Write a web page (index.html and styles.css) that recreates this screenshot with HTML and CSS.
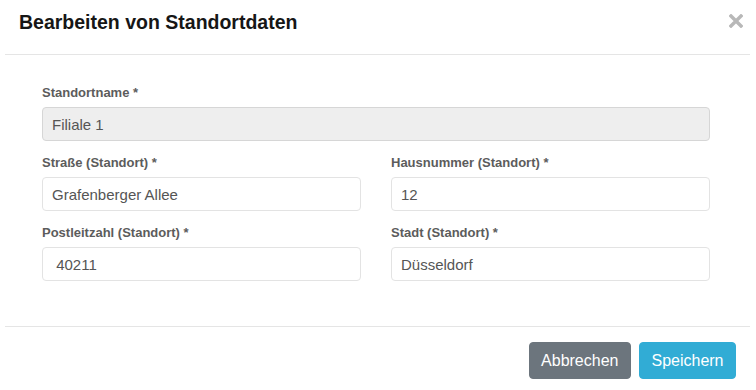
FILE: index.html
```html
<!DOCTYPE html>
<html lang="de">
<head>
    <meta charset="UTF-8">
    <meta name="viewport" content="width=device-width, initial-scale=1.0">
    <title>Bearbeiten von Standortdaten</title>
    <link rel="stylesheet" href="styles.css">
</head>
<body>

<!-- Dialog: Standort bearbeiten -->
<div class="modal">
    <div class="modal-header">
        <h4 class="modal-title">Bearbeiten von Standortdaten</h4>
        <button class="close-btn" type="button" aria-label="Schließen">
            <svg width="14" height="14" viewBox="0 0 14 14">
                <path d="M2 2 L12 12 M12 2 L2 12" stroke="#b8b8b8" stroke-width="3.4" stroke-linecap="square"/>
            </svg>
        </button>
    </div>

    <div class="modal-body">
        <div class="form-group full">
            <label>Standortname *</label>
            <input type="text" class="form-control" value="Filiale 1" disabled>
        </div>
        <div class="form-row">
            <div class="form-group">
                <label>Straße (Standort) *</label>
                <input type="text" class="form-control" value="Grafenberger Allee">
            </div>
            <div class="form-group">
                <label>Hausnummer (Standort) *</label>
                <input type="text" class="form-control" value="12">
            </div>
        </div>
        <div class="form-row">
            <div class="form-group">
                <label>Postleitzahl (Standort) *</label>
                <input type="text" class="form-control" value=" 40211">
            </div>
            <div class="form-group">
                <label>Stadt (Standort) *</label>
                <input type="text" class="form-control" value="Düsseldorf">
            </div>
        </div>
    </div>

    <div class="modal-footer">
        <button class="btn btn-secondary" type="button">Abbrechen</button>
        <button class="btn btn-info" type="button">Speichern</button>
    </div>
</div>

</body>
</html>
```

FILE: styles.css
```css
body {
    font-family: 'Liberation Sans', Arial, sans-serif;
    background: #fff;
    color: #333;
    margin: 0;
}
.modal {
    margin: 0 6px 0 5px;
    background-color: #fff;
}
.modal-header {
    box-sizing: border-box;
    height: 55px;
    padding: 10px 7px 0 14px;
    display: flex;
    justify-content: space-between;
    align-items: flex-start;
    border-bottom: 1px solid #e5e5e5;
}
.modal-title {
    margin: 0;
    font-size: 19.5px;
    line-height: 24px;
    font-weight: bold;
    color: #161616;
}
.close-btn {
    border: none;
    background: none;
    padding: 0;
    margin-top: 4px;
    width: 14px;
    height: 14px;
    cursor: pointer;
}
.close-btn svg {
    display: block;
}
.modal-body {
    padding: 29px 40px 45px 37px;
}
.form-row {
    display: grid;
    grid-template-columns: 1fr 1fr;
    column-gap: 30px;
}
.form-group {
    margin-bottom: 13px;
}
.form-row:last-child .form-group {
    margin-bottom: 0;
}
.form-group label {
    display: block;
    font-size: 13px;
    line-height: 18px;
    font-weight: bold;
    color: #5c5c5c;
    margin-bottom: 5px;
}
.form-control {
    box-sizing: border-box;
    display: block;
    width: 100%;
    height: 34px;
    padding: 0 9px;
    font-family: 'Liberation Sans', Arial, sans-serif;
    font-size: 15px;
    color: #555;
    background-color: #fff;
    border: 1px solid #e3e3e3;
    border-radius: 4px;
    outline: none;
}
.form-control:disabled {
    background-color: #eee;
    border-color: #d6d6d6;
    color: #555;
    -webkit-text-fill-color: #555;
    opacity: 1;
}
.modal-footer {
    border-top: 1px solid #e5e5e5;
    padding: 15px 14px 0 0;
    display: flex;
    justify-content: flex-end;
    gap: 8px;
}
.btn {
    font-family: 'Liberation Sans', Arial, sans-serif;
    font-size: 16px;
    line-height: 19px;
    padding: 8px 11.5px;
    color: #fff;
    border: 1px solid transparent;
    border-radius: 4px;
    cursor: pointer;
}
.btn-secondary {
    background-color: #6c757d;
    border-color: #6c757d;
}
.btn-info {
    background-color: #31acd5;
    border-color: #31acd5;
}
```
